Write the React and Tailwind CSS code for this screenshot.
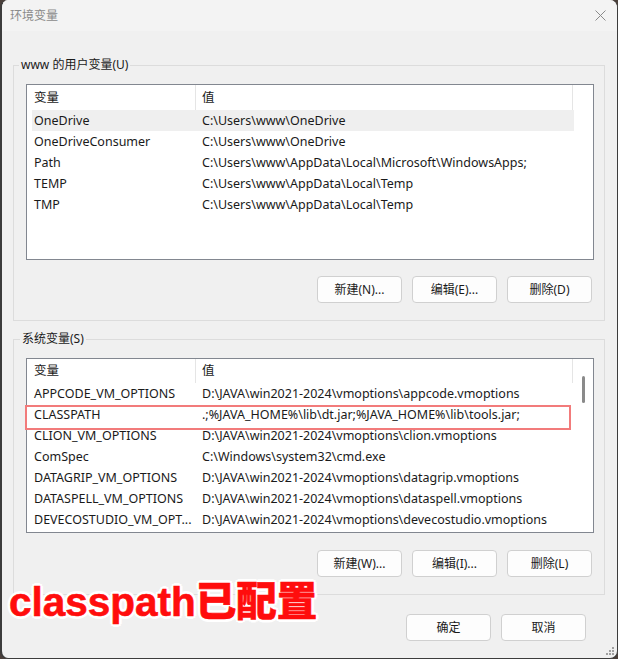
import React from "react";

const userVars = [
  ["OneDrive", "C:\\Users\\www\\OneDrive"],
  ["OneDriveConsumer", "C:\\Users\\www\\OneDrive"],
  ["Path", "C:\\Users\\www\\AppData\\Local\\Microsoft\\WindowsApps;"],
  ["TEMP", "C:\\Users\\www\\AppData\\Local\\Temp"],
  ["TMP", "C:\\Users\\www\\AppData\\Local\\Temp"],
];

const sysVars = [
  ["APPCODE_VM_OPTIONS", "D:\\JAVA\\win2021-2024\\vmoptions\\appcode.vmoptions"],
  ["CLASSPATH", ".;%JAVA_HOME%\\lib\\dt.jar;%JAVA_HOME%\\lib\\tools.jar;"],
  ["CLION_VM_OPTIONS", "D:\\JAVA\\win2021-2024\\vmoptions\\clion.vmoptions"],
  ["ComSpec", "C:\\Windows\\system32\\cmd.exe"],
  ["DATAGRIP_VM_OPTIONS", "D:\\JAVA\\win2021-2024\\vmoptions\\datagrip.vmoptions"],
  ["DATASPELL_VM_OPTIONS", "D:\\JAVA\\win2021-2024\\vmoptions\\dataspell.vmoptions"],
  ["DEVECOSTUDIO_VM_OPT...", "D:\\JAVA\\win2021-2024\\vmoptions\\devecostudio.vmoptions"],
];

function Header({ h }) {
  return (
    <div className={`flex ${h} w-[546px] bg-white border-r border-[#e5e5e5]`}>
      <div className="w-[169px] border-r border-[#e5e5e5] pl-[7px] pt-[1px] flex items-center">变量</div>
      <div className="pl-[6px] pt-[1px] flex items-center">值</div>
    </div>
  );
}

function Row({ name, value, selected }) {
  return (
    <div className={`flex h-[21px] items-center pt-[2px] ml-[5px] w-[542px] ${selected ? "bg-[#efefef]" : ""}`}>
      <div className="w-[164px] pl-[2px] whitespace-nowrap overflow-hidden">{name}</div>
      <div className="pl-[6px] whitespace-nowrap">{value}</div>
    </div>
  );
}

function Btn({ children, w = "w-[85px]" }) {
  return (
    <button className={`${w} h-[27px] rounded-[4px] border border-[#d0d0d0] bg-[#fdfdfd] text-[12px] text-[#1a1a1a] flex items-center justify-center`}>
      {children}
    </button>
  );
}

export default function App() {
  return (
    <div className="w-[618px] h-[659px] bg-[#4a3f3a] font-['Noto_Sans','Noto_Sans_CJK_SC',sans-serif] text-[12.5px] text-[#1a1a1a]">
      <div className="relative w-full h-full rounded-[8px] overflow-hidden border-l-2 border-r border-b border-[#3c3c3c] bg-[#f0f0f0] flex flex-col">
        {/* Title bar */}
        <div className="h-[31px] bg-[#f3f3f3] flex items-center justify-between pl-[8px] pr-[10px] shrink-0">
          <span className="text-[12px] text-[#8a8a8a]">环境变量</span>
          <svg width="11" height="11" viewBox="0 0 11 11" className="mr-[1px]">
            <path d="M0.5 0.5 L10.5 10.5 M10.5 0.5 L0.5 10.5" stroke="#8a8a8a" strokeWidth="1" />
          </svg>
        </div>

        <div className="flex flex-col pl-[11px] pr-[12px]">
          {/* User vars group */}
          <fieldset className="mt-[26px] border border-[#dcdcdc] h-[264px] pl-[12px] pr-[10px]">
            <legend className="ml-[-7px] px-[2px] leading-[16px] text-[12px]">www 的用户变量(U)</legend>
            <div className="mt-[11px] h-[176px] border border-[#828790] bg-white">
              <Header h="h-[25px]" />
              {userVars.map((r, i) => (
                <Row key={r[0]} name={r[0]} value={r[1]} selected={i === 0} />
              ))}
            </div>
            <div className="flex justify-end gap-[10px] mt-[16px] pr-[2px]">
              <Btn>新建(N)...</Btn>
              <Btn>编辑(E)...</Btn>
              <Btn>删除(D)</Btn>
            </div>
          </fieldset>

          {/* System vars group */}
          <fieldset className="mt-[10px] border border-[#dcdcdc] h-[264px] pl-[12px] pr-[10px]">
            <legend className="ml-[-6px] px-[2px] leading-[16px] text-[12px]">系统变量(S)</legend>
            <div className="relative mt-[11px] h-[175px] border border-[#828790] bg-white flex">
              <div className="flex flex-col">
                <Header h="h-[24px]" />
                {sysVars.map((r) => (
                  <Row key={r[0]} name={r[0]} value={r[1]} />
                ))}
              </div>
              <div className="flex-1 flex justify-center pt-[17px]">
                <div className="w-[3px] h-[27px] rounded-full bg-[#8a8a8a] mr-[1px]"></div>
              </div>
              <div className="absolute left-[-2px] top-[46px] w-[546px] h-[25px] border-2 border-[#f27b7b]"></div>
            </div>
            <div className="flex justify-end gap-[10px] mt-[17px] pr-[2px]">
              <Btn>新建(W)...</Btn>
              <Btn>编辑(I)...</Btn>
              <Btn>删除(L)</Btn>
            </div>
          </fieldset>

          <div className="flex justify-end gap-[10px] mt-[19px] pr-[19px]">
            <Btn>确定</Btn>
            <Btn>取消</Btn>
          </div>
        </div>

        {/* Annotation */}
        <div className="absolute left-[7px] top-[577px] text-[40.5px] leading-[50px] font-black text-[#ff0d0d] font-['Liberation_Sans','Noto_Sans_CJK_SC',sans-serif] [-webkit-text-stroke:0.6px_#ff0d0d] [text-shadow:2px_0_0_#fff,-2px_0_0_#fff,0_2px_0_#fff,0_-2px_0_#fff,2px_2px_0_#fff,-2px_-2px_0_#fff,2px_-2px_0_#fff,-2px_2px_0_#fff,3px_0_0_#fff,-3px_0_0_#fff,0_3px_0_#fff,0_-3px_0_#fff]">
          classpath已配置
        </div>

        {/* resize grip */}
        <svg width="10" height="10" viewBox="0 0 10 10" className="absolute right-[2px] bottom-[2px]">
          <rect x="7" y="1" width="2" height="2" fill="#a0a0a0" />
          <rect x="4" y="4" width="2" height="2" fill="#a0a0a0" />
          <rect x="7" y="4" width="2" height="2" fill="#a0a0a0" />
          <rect x="1" y="7" width="2" height="2" fill="#a0a0a0" />
          <rect x="4" y="7" width="2" height="2" fill="#a0a0a0" />
          <rect x="7" y="7" width="2" height="2" fill="#a0a0a0" />
        </svg>
      </div>
    </div>
  );
}
